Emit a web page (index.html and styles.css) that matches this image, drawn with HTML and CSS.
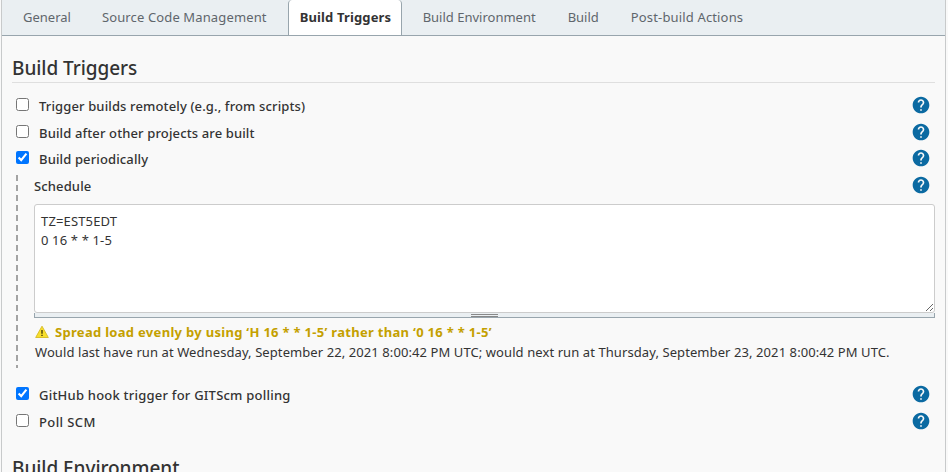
FILE: index.html
```html
<!DOCTYPE html>
<html lang="en">
<head>
  <meta charset="UTF-8">
  <meta name="viewport" content="width=device-width, initial-scale=1.0">
  <title>Job Config</title>
  <link rel="stylesheet" href="styles.css">
</head>
<body>
  <svg class="defs" width="0" height="0">
    <symbol id="help" viewBox="0 0 24 24">
      <path d="M12 2C6.48 2 2 6.48 2 12s4.48 10 10 10 10-4.48 10-10S17.52 2 12 2zm1 17h-2v-2h2v2zm2.07-7.75l-.9.92C13.45 12.9 13 13.5 13 15h-2v-.5c0-1.1.45-2.1 1.17-2.83l1.24-1.26c.37-.36.59-.86.59-1.41 0-1.1-.9-2-2-2s-2 .9-2 2H8c0-2.21 1.79-4 4-4s4 1.79 4 4c0 .88-.36 1.68-.93 2.25z"/>
    </symbol>
  </svg>
  <div class="config">
    <nav class="tab-bar">
      <a class="tab">General</a>
      <a class="tab tab-scm">Source Code Management</a>
      <a class="tab active">Build Triggers</a>
      <a class="tab">Build Environment</a>
      <a class="tab">Build</a>
      <a class="tab tab-post">Post-build Actions</a>
    </nav>

    <form class="config-form">
      <h2 class="section-header">Build Triggers</h2>

      <div class="row">
        <input type="checkbox" class="check" id="remote">
        <label class="label" for="remote">Trigger builds remotely (e.g., from scripts)</label>
        <svg class="help"><use href="#help"/></svg>
      </div>
      <div class="row">
        <input type="checkbox" class="check" id="after">
        <label class="label" for="after">Build after other projects are built</label>
        <svg class="help"><use href="#help"/></svg>
      </div>
      <div class="row">
        <input type="checkbox" class="check" id="timer" checked>
        <label class="label" for="timer">Build periodically</label>
        <svg class="help"><use href="#help"/></svg>
      </div>

      <div class="nested">
        <div class="row">
          <label class="label" for="spec">Schedule</label>
          <svg class="help"><use href="#help"/></svg>
        </div>
        <textarea class="schedule" id="spec" spellcheck="false">TZ=EST5EDT
0 16 * * 1-5</textarea>
        <div class="handle"><span class="grip"></span></div>
        <div class="warning">
          <svg class="warning-icon" viewBox="0 0 14 14">
            <path d="M7 1.2L13.3 12.5H.7z" fill="#f8df2c" stroke="#d9bf2e" stroke-linejoin="round"/>
            <path d="M6.2 5h1.6v3.8H6.2zM6.2 9.7h1.6v1.3H6.2z" fill="#5c5210"/>
          </svg>
          <span class="warning-text">Spread load evenly by using ‘H 16 * * 1-5’ rather than ‘0 16 * * 1-5’</span>
        </div>
        <div class="ok">Would last have run at Wednesday, September 22, 2021 8:00:42 PM UTC; would next run at Thursday, September 23, 2021 8:00:42 PM UTC.</div>
      </div>

      <div class="row">
        <input type="checkbox" class="check" id="github" checked>
        <label class="label label-github" for="github">GitHub hook trigger for GITScm polling</label>
        <svg class="help"><use href="#help"/></svg>
      </div>
      <div class="row">
        <input type="checkbox" class="check" id="poll">
        <label class="label label-poll" for="poll">Poll SCM</label>
        <svg class="help"><use href="#help"/></svg>
      </div>

      <h2 class="section-header next">Build Environment</h2>
    </form>
  </div>
</body>
</html>
```

FILE: styles.css
```css
* {
  box-sizing: border-box;
}
body {
  margin: 0;
  height: 472px;
  overflow: hidden;
  background: #f9f9f9;
  color: #333;
  font-family: "Noto Sans", "Open Sans", sans-serif;
  font-size: 13px;
}
.defs {
  display: block;
}
.config {
  width: 945px;
  height: 472px;
  margin-left: 1px;
  border: 1px solid #c8cacb;
  border-width: 0 1px;
  overflow: hidden;
}
.tab-bar {
  display: flex;
  height: 36px;
  padding-left: 5px;
  background: #eaeff2;
  border-bottom: 1px solid #98a5ad;
}
.tab {
  padding: 0 16px;
  line-height: 34px;
  color: #5f666c;
  white-space: nowrap;
}
.tab-scm {
  padding-left: 15px;
  letter-spacing: 0.13px;
}
.tab-post {
  letter-spacing: 0.15px;
}
.tab.active {
  width: 114px;
  margin: 0 5px;
  padding: 0 10px 0 11px;
  background: #fff;
  border: 1px solid #98a5ad;
  border-width: 0 1px;
  border-radius: 4px 4px 0 0;
  color: #333;
  font-weight: 700;
  letter-spacing: 0.15px;
}
.config-form {
  padding: 19px 10px 0;
}
.section-header {
  height: 28px;
  margin: 0 0 9px;
  border-bottom: 1px solid #dfdfdf;
  font-size: 19px;
  font-weight: 500;
  line-height: 27px;
  letter-spacing: -0.05px;
  white-space: nowrap;
}
.section-header.next {
  margin-top: 21px;
}
.row {
  display: flex;
  align-items: center;
  height: 26.5px;
  padding: 0 4px;
}
.check {
  width: 13px;
  height: 13px;
  margin: 0 10px 1px 0;
}
.label {
  padding-top: 2px;
  font-weight: 500;
  letter-spacing: 0.13px;
  white-space: nowrap;
}
.label-github {
  letter-spacing: 0.22px;
}
.label-poll {
  letter-spacing: 0.4px;
}
.help {
  width: 20px;
  height: 20px;
  margin-left: auto;
  fill: #0b6aa2;
}
.nested {
  height: 193px;
  margin: 3.5px 0 12.8px 4px;
  padding-left: 18px;
  background: repeating-linear-gradient(#a3a3a3 0 6px, transparent 6px 10px) 0 0 / 2px 100% no-repeat;
}
.nested .row {
  height: 20px;
  margin-bottom: 9px;
  padding-left: 0;
}
.schedule {
  display: block;
  width: 901px;
  height: 109px;
  padding: 7px 6px;
  background: #fff;
  border: 1px solid #ccc;
  border-radius: 3px;
  color: #333;
  font: inherit;
  line-height: 19px;
  letter-spacing: 0.15px;
  outline: none;
}
.handle {
  display: flex;
  justify-content: center;
  width: 901px;
  height: 5px;
  background: #eaeff2;
  border: 1px solid #98a5ad;
  border-top: 0;
}
.grip {
  width: 27px;
  height: 3px;
  margin-top: 1px;
  border: 1px solid #888;
  border-width: 1px 0;
}
.warning {
  display: flex;
  align-items: center;
  height: 20px;
  margin-top: 4px;
  padding-left: 1px;
  color: #c4a000;
  font-weight: 700;
  letter-spacing: 0.3px;
  white-space: nowrap;
}
.warning-icon {
  width: 14px;
  height: 14px;
  margin-right: 6px;
}
.ok {
  padding-left: 1px;
  line-height: 20px;
  letter-spacing: 0.085px;
  white-space: nowrap;
}
```
